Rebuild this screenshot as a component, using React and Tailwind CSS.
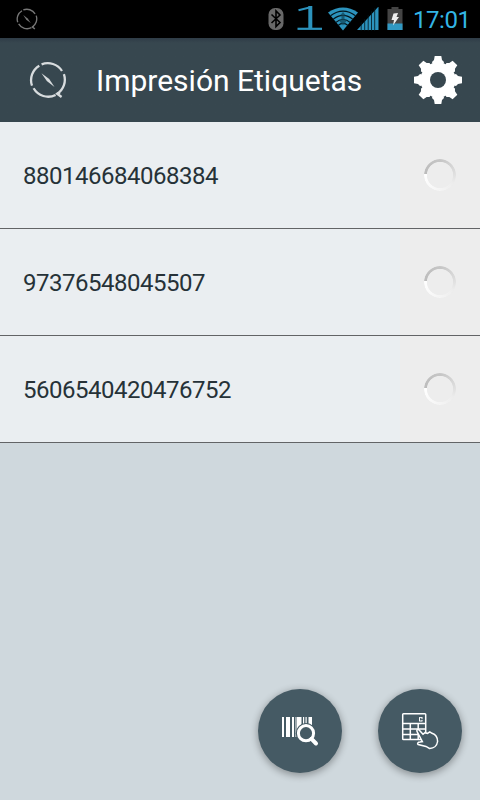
import React from "react";

const labels = ["880146684068384", "97376548045507", "5606540420476752"];

// round logo, used small in the status bar and bigger in the header
function Logo({ className }) {
  return (
    <svg viewBox="0 0 38 38" className={className} fill="none" stroke="currentColor" strokeWidth="2.3">
      <path d="M12.6 3.4 A16.8 16.8 0 0 1 33 10" />
      <path d="M34.9 13.2 A16.8 16.8 0 0 1 28.2 32.8 L32.6 36" />
      <path d="M26.6 34 A16.8 16.8 0 0 1 4.6 27.3" />
      <path d="M3 24.7 A16.8 16.8 0 0 1 10.3 4.7" />
      <path d="M28.2 32.8 L31 31.6" />
      <path d="M12.5 12.3 L20.2 18 L25.5 25.9 L17.8 20.1 Z" fill="currentColor" stroke="none" />
    </svg>
  );
}

function Wifi() {
  return (
    <svg viewBox="0 0 30 24" className="w-[30px] h-6">
      <path d="M0 5.5 Q15 -4.5 30 5.5 L15 23.5 Z" fill="#2c93bd" />
      <g fill="none" stroke="#03141b" strokeWidth="1.2">
        <path d="M2.5 8.8 Q15 -0.4 27.5 8.8" />
        <path d="M5 12.4 Q15 4.5 25 12.4" />
        <path d="M7.5 15.6 Q15 9.4 22.5 15.6" />
        <path d="M10 18.5 Q15 14.4 20 18.5" />
      </g>
      <path d="M15 5 L18 8.5 H16.5 V13.5 H19 L15 18.5 L11 13.5 H13.5 V8.5 H12 Z" fill="#124a5f" opacity=".75" />
    </svg>
  );
}

function StatusBar() {
  return (
    <div className="h-[38px] bg-black flex items-center text-[#33b5e5] shrink-0">
      <Logo className="w-[22px] h-[22px] ml-4 text-[#777]" />
      <svg viewBox="0 0 16 24" className="w-4 h-6 ml-auto">
        <rect x="0.5" y="1" width="15" height="22" rx="6.5" fill="#686868" />
        <path d="M3.5 7.5 L12 15.5 L8 19.5 V4 L12 8 L3.5 16" fill="none" stroke="#000" strokeWidth="1.6" />
      </svg>
      <svg viewBox="0 0 26 26" className="w-[26px] h-[26px] ml-[13px]" fill="none" stroke="#2c93bd">
        <path d="M1.5 4.2 L14.5 1" strokeWidth="2" />
        <path d="M13.3 0 V23" strokeWidth="4" />
        <path d="M0.5 22.8 H25" strokeWidth="2.2" />
      </svg>
      <div className="ml-[5px]">
        <Wifi />
      </div>
      <svg viewBox="0 0 22 24" className="w-[22px] h-6 -ml-px">
        <path d="M0 23 L21.5 -0.5 V23 Z" fill="#2c93bd" />
        <path d="M4.2 15 V24 M7.7 12 V24 M11.2 8 V24 M14.5 4 V24 M17.7 1 V24" stroke="#02141b" strokeWidth=".8" />
      </svg>
      <svg viewBox="0 0 16 24" className="w-4 h-6 ml-2">
        <path d="M4.5 0 H11.5 V2 H15.5 V23 H0.5 V2 H4.5 Z" fill="#444" />
        <path d="M0.5 16.5 H15.5 V23 H0.5 Z" fill="#3199c3" />
        <path d="M6.5 6.5 L11 6 L9.5 10 H12 L6 18.5 L7 13 H4.5 Z" fill="#eee" />
      </svg>
      <span className="w-[57px] ml-[11px] mr-[9px] pt-0.5 -indent-px text-2xl leading-none tracking-[-0.45px] whitespace-nowrap">17:01</span>
    </div>
  );
}

function Gear() {
  return (
    <svg viewBox="-24 -24 48 48" className="w-12 h-12" fill="#fff">
      <path d="M-5 -14 L-6 -18 L-4 -20 L-3.3 -24 H3.3 L4 -20 L6 -18 L5 -14 V14 L6 18 L4 20 L3.3 24 H-3.3 L-4 20 L-6 18 L-5 14 Z" />
      <path d="M-14 -5 L-18 -6 L-20 -4 L-24 -3.3 V3.3 L-20 4 L-18 6 L-14 5 H14 L18 6 L20 4 L24 3.3 V-3.3 L20 -4 L18 -6 L14 -5 Z" />
      <path transform="rotate(45)" d="M-5 -14 L-6 -18 L-4 -20 L-3.3 -24 H3.3 L4 -20 L6 -18 L5 -14 V14 L6 18 L4 20 L3.3 24 H-3.3 L-4 20 L-6 18 L-5 14 Z" />
      <path transform="rotate(45)" d="M-14 -5 L-18 -6 L-20 -4 L-24 -3.3 V3.3 L-20 4 L-18 6 L-14 5 H14 L18 6 L20 4 L24 3.3 V-3.3 L20 -4 L18 -6 L14 -5 Z" />
      <circle r="17.5" />
      <circle r="8" fill="#37474f" />
    </svg>
  );
}

function Header() {
  return (
    <div className="h-[84px] bg-[#37474f] bg-linear-to-b from-[#2f3c47] to-[#37474f] to-[5px] flex items-center shrink-0">
      <Logo className="w-[38px] h-[38px] ml-[29px] text-[#d8dcde]" />
      <h1 className="ml-[29px] pt-0.5 text-[30px] leading-none text-white whitespace-nowrap">Impresión Etiquetas</h1>
      <div className="ml-auto mr-[18px]">
        <Gear />
      </div>
    </div>
  );
}

function LabelRow({ code }) {
  return (
    <div className="h-[107px] border-b border-[#626466] flex bg-[#eaeef1]">
      <div className="flex-1 flex items-center pl-[23px] pt-0.5 text-2xl tracking-[-0.48px] text-[#263238]">{code}</div>
      <div className="w-20 bg-[#ededed] flex items-center justify-center pb-px">
        <div className="w-8 h-8 rounded-full bg-[conic-gradient(from_275deg,#bcbcbc,#c6c6c6_25%,#dcdcdc_45%,#ededed_58%,#f3f3f3_70%,#fff_100%)] [mask:radial-gradient(circle,transparent_12.7px,#000_13.5px)]" />
      </div>
    </div>
  );
}

function Fab({ children }) {
  return (
    <button className="w-[84px] h-[84px] rounded-full bg-[#455a64] flex items-center justify-center shadow-[0_2px_7px_1px_rgba(0,0,0,0.3)]">
      {children}
    </button>
  );
}

function BarcodeIcon() {
  return (
    <svg viewBox="0 0 38 38" className="w-[38px] h-[38px]">
      <path d="M1 5h2v20h-2z M5 5h4v20h-4z M11 5h2v20h-2z M14.5 5h1v20h-1z M16 5h4.5v20h-4.5z M22 5h1.2v8h-1.2z M24.5 5h1.2v8h-1.2z M27.5 5h3.5v9h-3.5z" fill="#fff" />
      <circle cx="25" cy="21.2" r="10.2" fill="#455a64" />
      <circle cx="25" cy="21.2" r="7.6" fill="none" stroke="#fff" strokeWidth="3" />
      <path d="M30.5 26.8 L35 31.5" stroke="#fff" strokeWidth="4" strokeLinecap="round" />
    </svg>
  );
}

function KeypadIcon() {
  return (
    <svg viewBox="0 0 38 38" className="w-[38px] h-[38px]" fill="none" stroke="#fff" strokeWidth="1.5">
      <rect x="1.7" y="1.7" width="23" height="25.8" rx=".8" />
      <path d="M1.7 11.6 H24.7 M1.7 17 H24.7 M1.7 22.4 H24.7 M9.3 11.6 V27.5 M17.2 11.6 V27.5" />
      <path d="M18.5 5.3 V9.2 M18.3 5.6 H21.3 M18.3 9 H21.3 M21 5.3 V7 M21 7.8 V9.2" strokeWidth="1" />
      <path
        d="M16.2 19.8 C15 17.8 17 16.7 18.6 18.4 L22 22.3 L24 20.7 L26.5 21.4 L28.8 19.8 L31 21.3 C34.5 22.5 36.6 26 36.6 29.5 C36 33.5 33 36.5 28.5 36.4 L25 34.4 L17.2 32.6 C15.8 31.4 17 30 19 30 L21.4 29.6 Z"
        fill="#455a64"
      />
    </svg>
  );
}

export default function App() {
  return (
    <div className="w-[480px] h-[800px] bg-[#cfd8dd] flex flex-col overflow-hidden font-[Roboto,sans-serif]">
      <StatusBar />
      <Header />
      <div>
        {labels.map((code) => (
          <LabelRow key={code} code={code} />
        ))}
      </div>
      <div className="flex-1 flex items-end justify-end gap-9 pr-[18px] pb-[27px]">
        <Fab>
          <BarcodeIcon />
        </Fab>
        <Fab>
          <KeypadIcon />
        </Fab>
      </div>
    </div>
  );
}
